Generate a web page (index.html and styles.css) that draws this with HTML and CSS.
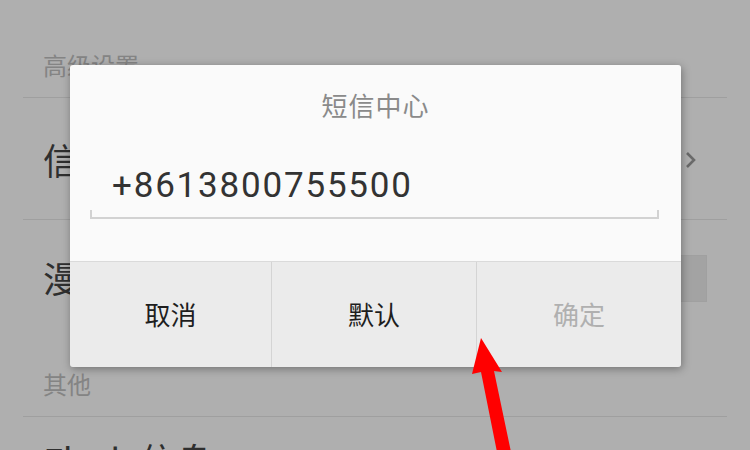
FILE: index.html
```html
<!DOCTYPE html>
<html lang="zh-CN">
<head>
<meta charset="utf-8">
<title>短信中心</title>
<link rel="stylesheet" href="styles.css">
</head>
<body>
<div class="settings">
  <div class="section-header first">高级设置</div>
  <div class="sep"></div>
  <div class="row">
    <span class="row-label">信息中心号码</span>
    <span class="chevron">
      <svg width="12" height="20" viewBox="0 0 12 20"><path d="M2 3 L9 10 L2 17" fill="none" stroke="#6a6a6a" stroke-width="2.6"/></svg>
    </span>
  </div>
  <div class="sep"></div>
  <div class="row row-toggle">
    <span class="row-label">漫游时自动接收彩信</span>
    <span class="toggle"></span>
  </div>
  <div class="section-header">其他</div>
  <div class="sep"></div>
  <div class="row row-last">
    <span class="row-label">Flash 信息</span>
  </div>
</div>

<div class="dialog">
  <div class="dialog-body">
    <div class="dialog-title">短信中心</div>
    <div class="field">
      <span class="field-text">+8613800755500</span>
    </div>
  </div>
  <div class="dialog-buttons">
    <div class="btn">取消</div>
    <div class="btn">默认</div>
    <div class="btn disabled">确定</div>
  </div>
</div>

<svg class="arrow" width="750" height="450" viewBox="0 0 750 450">
  <polygon points="481,338 502,372 494,371 511,452 497,452 481,372 472,374" fill="#ff0000"/>
</svg>
</body>
</html>
```

FILE: styles.css
```css
html, body {
  margin: 0;
  padding: 0;
}
body {
  width: 750px;
  height: 450px;
  overflow: hidden;
  background: #afafaf;
  font-family: "Noto Sans CJK SC", Roboto, sans-serif;
  position: relative;
}

.settings {
  padding: 0 23px;
}
.section-header {
  box-sizing: border-box;
  height: 76px;
  padding-left: 20px;
  padding-bottom: 17px;
  display: flex;
  align-items: flex-end;
  font-size: 24px;
  line-height: 30px;
  color: #848484;
}
.section-header.first {
  height: 97px;
  padding-bottom: 17px;
}
.sep {
  height: 1px;
  background: #9f9f9f;
}
.row {
  box-sizing: border-box;
  height: 121px;
  padding: 0 30px 0 20px;
  display: flex;
  align-items: center;
  justify-content: space-between;
  font-size: 36px;
  color: #2f2f2f;
}
.row-toggle {
  height: 120px;
  padding-right: 20px;
  align-items: flex-start;
  padding-top: 35px;
}
.row-last {
  height: 33px;
  align-items: flex-start;
  padding-top: 20px;
  overflow: hidden;
}
.row-label {
  line-height: 44px;
  white-space: nowrap;
}
.chevron {
  display: flex;
  margin-top: 2px;
}
.toggle {
  width: 60px;
  height: 47px;
  background: #a3a3a3;
  border: 1px solid #a0a0a0;
  box-sizing: border-box;
}

.dialog {
  position: absolute;
  left: 70px;
  top: 65px;
  width: 611px;
  height: 302px;
  border-radius: 3px;
  overflow: hidden;
  display: flex;
  flex-direction: column;
  box-shadow: 1px 2px 8px rgba(0, 0, 0, 0.35);
}
.dialog-body {
  flex: 1;
  background: #fafafa;
}
.dialog-title {
  padding: 20px 0;
  height: 40px;
  line-height: 40px;
  text-align: center;
  font-size: 26px;
  letter-spacing: 1px;
  color: #8a8a8a;
}
.field {
  position: relative;
  box-sizing: border-box;
  height: 74px;
  margin: 0 22px 0 20px;
  padding: 21px 0 0 22px;
  border-bottom: 2px solid #d2d2d2;
}
.field::before,
.field::after {
  content: "";
  position: absolute;
  bottom: 0;
  width: 2px;
  height: 7px;
  background: #d2d2d2;
}
.field::before { left: 0; }
.field::after { right: 0; }
.field-text {
  font-family: Roboto, "Noto Sans CJK SC", sans-serif;
  font-size: 35px;
  line-height: 40px;
  letter-spacing: 1.8px;
  color: #333333;
}
.dialog-buttons {
  height: 106px;
  box-sizing: border-box;
  border-top: 1px solid #dadada;
  background: #ebebeb;
  display: grid;
  grid-template-columns: 201px 205px 1fr;
}
.btn {
  display: flex;
  align-items: center;
  justify-content: center;
  font-size: 26px;
  color: #1e1e1e;
  padding-bottom: 2px;
}
.btn + .btn {
  border-left: 1px solid #d4d4d4;
}
.btn.disabled {
  color: #b0b0b0;
}

.arrow {
  position: absolute;
  left: 0;
  top: 0;
}
```
